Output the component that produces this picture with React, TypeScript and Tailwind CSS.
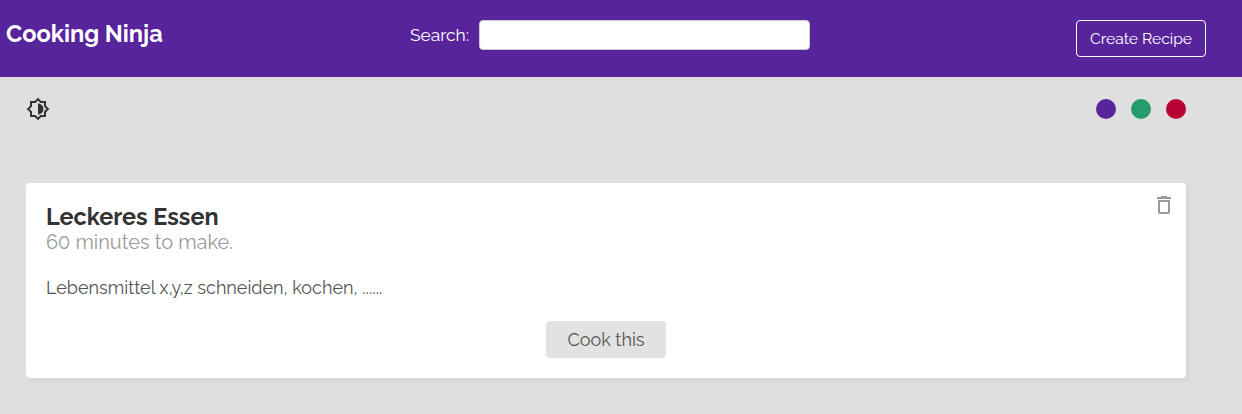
import React from "react";
import { MdOutlineDelete } from "react-icons/md";

function BrightnessIcon() {
  return (
    <svg viewBox="0 0 24 24" className="size-6" fill="currentColor" aria-hidden="true">
      <path d="M20 15.31L23.31 12 20 8.69V4h-4.69L12 .69 8.69 4H4v4.69L.69 12 4 15.31V20h4.69L12 23.31 15.31 20H20v-4.69zm-2-.83V18h-3.52L12 20.48 9.52 18H6v-3.52L3.52 12 6 9.52V6h3.52L12 3.52 14.48 6H18v3.52L20.48 12 18 14.48zM12 6.5v11c3.03 0 5.5-2.47 5.5-5.5S15.03 6.5 12 6.5z" />
    </svg>
  );
}

export default function App() {
  return (
    <div className="h-[414px] w-full overflow-hidden whitespace-nowrap bg-[#dfdfdf] font-['Raleway','Open_Sans',sans-serif] text-[#333]">
      <header className="flex h-[77px] items-start bg-[#58249c] text-white">
        <h1 className="ml-1.5 mt-4 w-[404px] text-[23.6px] font-bold leading-9">Cooking Ninja</h1>
        <label htmlFor="search" className="mt-5 w-[69px] text-[17.4px] leading-[30px]">Search:</label>
        <input id="search" className="mt-5 h-[30px] w-[331px] rounded border border-[#ccc] bg-white px-2 text-black" />
        <button className="ml-auto mr-9 mt-5 flex h-[37px] w-[130px] items-center justify-center rounded border border-white text-[15.7px]">
          Create Recipe
        </button>
      </header>
      <div className="flex items-center justify-between pl-[26px] pr-14 pt-5">
        <BrightnessIcon />
        <div className="flex gap-[15px]">
          <span className="size-5 rounded-full bg-[#58249c]" />
          <span className="size-5 rounded-full bg-[#249c6b]" />
          <span className="size-5 rounded-full bg-[#b70233]" />
        </div>
      </div>
      <article className="ml-[26px] mt-[62px] flex h-[195px] w-[1160px] justify-between rounded bg-white shadow-[3px_3px_5px_rgba(0,0,0,0.05)]">
        <div className="flex w-full flex-col pl-5 pt-5">
          <h3 className="text-[23.4px] font-bold leading-7">Leckeres Essen</h3>
          <p className="-mt-px text-[20px] leading-6 text-[#999]">60 minutes to make.</p>
          <div className="mt-[22px] text-[18px] leading-6 text-[#555]">Lebensmittel x,y,z schneiden, kochen, ......</div>
          <button className="ml-[500px] mt-[21px] flex h-[37px] w-[120px] items-center justify-center rounded bg-[#e2e2e2] text-[18px] text-[#555]">Cook this</button>
        </div>
        <MdOutlineDelete className="mr-2.5 mt-2.5 size-6 shrink-0 text-[#999]" />
      </article>
    </div>
  );
}
